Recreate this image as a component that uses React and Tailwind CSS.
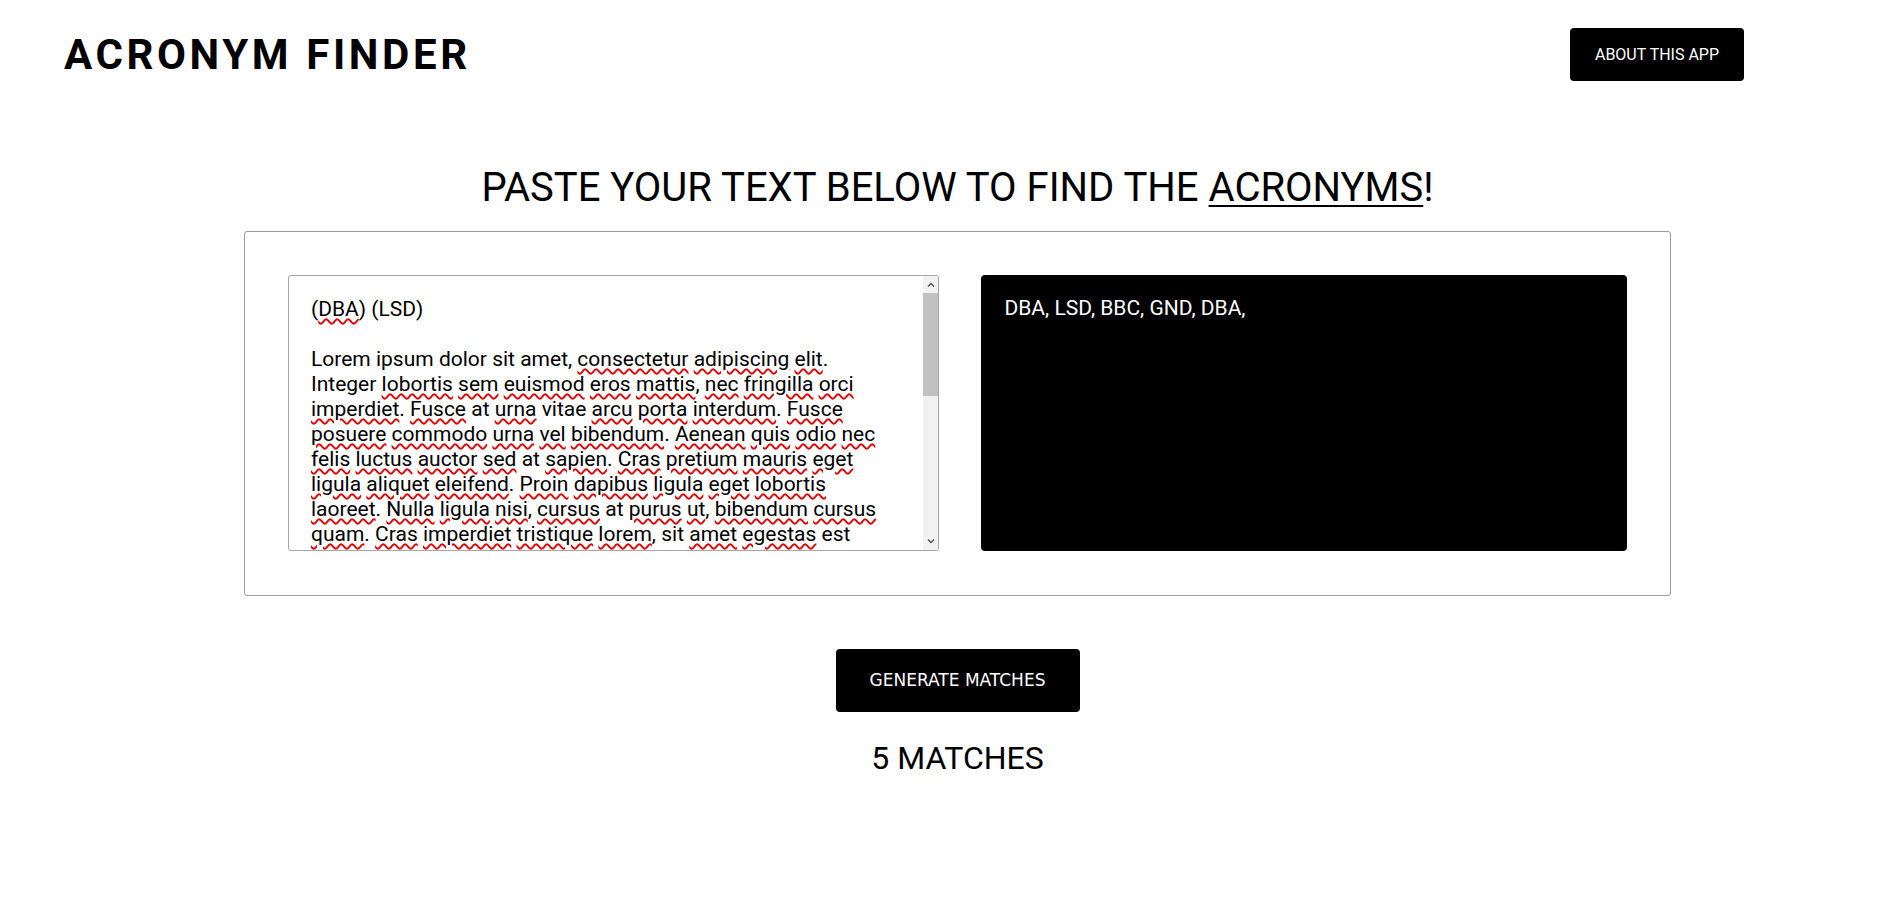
import React from "react";

const W = ({ children }) => (
  <span className="underline decoration-wavy decoration-[#e00000] decoration-[1.5px] underline-offset-[2px]">
    {children}
  </span>
);

const Chevron = ({ up }) => (
  <svg width="8" height="5" viewBox="0 0 8 5" className="block">
    <path
      d={up ? "M1 4.5 L4 1.5 L7 4.5" : "M1 0.5 L4 3.5 L7 0.5"}
      fill="none"
      stroke="#505050"
      strokeWidth="1.4"
    />
  </svg>
);

export default function App() {
  return (
    <div className="min-h-screen bg-white text-black font-['Roboto','Liberation_Sans',sans-serif]">
      <header className="flex items-center justify-between pt-[28px] pl-[64px] pr-[156px]">
        <h1 className="text-[42px] leading-[49px] font-bold tracking-[3.6px]">ACRONYM FINDER</h1>
        <button className="w-[174px] h-[53px] rounded-[4px] bg-black text-white text-[16px]">
          ABOUT THIS APP
        </button>
      </header>

      <main className="ml-[244px] w-[1427px]">
        <h2 className="mt-[83px] text-center text-[40px] leading-[47px] font-normal">
          PASTE YOUR TEXT BELOW TO FIND THE{" "}
          <span className="underline underline-offset-[4px] decoration-2">ACRONYMS</span>!
        </h2>

        <section className="mt-[20px] h-[365px] border border-[#9c9c9c] rounded-[3px] p-[43px] flex gap-[42px]">
          <div className="w-[652px] h-[276px] border border-[#a5a5a5] rounded-[3px] flex overflow-hidden">
            <div className="flex-1 overflow-hidden pl-[22px] pt-[21px] text-[21px] leading-[25px] text-black whitespace-nowrap">
              (<W>DBA</W>) (LSD)
              <br />
              <br />
              Lorem ipsum dolor sit amet, <W>consectetur</W> <W>adipiscing</W> <W>elit</W>.
              <br />
              Integer <W>lobortis</W> <W>sem</W> <W>euismod</W> <W>eros</W> <W>mattis</W>, <W>nec</W> <W>fringilla</W> <W>orci</W>
              <br />
              <W>imperdiet</W>. <W>Fusce</W> at <W>urna</W> vitae <W>arcu</W> <W>porta</W> <W>interdum</W>. <W>Fusce</W>
              <br />
              <W>posuere</W> <W>commodo</W> <W>urna</W> <W>vel</W> <W>bibendum</W>. <W>Aenean</W> <W>quis</W> <W>odio</W> <W>nec</W>
              <br />
              <W>felis</W> <W>luctus</W> <W>auctor</W> <W>sed</W> at <W>sapien</W>. <W>Cras</W> <W>pretium</W> <W>mauris</W> <W>eget</W>
              <br />
              <W>ligula</W> <W>aliquet</W> <W>eleifend</W>. <W>Proin</W> <W>dapibus</W> <W>ligula</W> <W>eget</W> <W>lobortis</W>
              <br />
              <W>laoreet</W>. <W>Nulla</W> <W>ligula</W> <W>nisi</W>, <W>cursus</W> at <W>purus</W> <W>ut</W>, <W>bibendum</W> <W>cursus</W>
              <br />
              <W>quam</W>. <W>Cras</W> <W>imperdiet</W> <W>tristique</W> <W>lorem</W>, sit <W>amet</W> <W>egestas</W> est
              <br />
              <W>dapibus</W> <W>vel</W>. <W>Donec</W> (BBC) <W>vulputate</W> <W>ante</W> <W>quis</W> <W>velit</W>
            </div>
            <div className="w-[15px] h-full bg-[#f1f1f1] flex flex-col">
              <div className="h-[17px] flex items-center justify-center">
                <Chevron up />
              </div>
              <div className="h-[103px] bg-[#c1c1c1]" />
              <div className="flex-1" />
              <div className="h-[17px] flex items-center justify-center">
                <Chevron />
              </div>
            </div>
          </div>

          <div className="w-[646px] h-[276px] bg-black rounded-[4px] pl-[23px] pt-[21px] text-white text-[21px] leading-[25px]">
            DBA, LSD, BBC, GND, DBA,
          </div>
        </section>

        <div className="flex flex-col items-center">
          <button className="mt-[53px] w-[244px] h-[63px] rounded-[4px] bg-black text-white text-[17px] font-['DejaVu_Sans',sans-serif]">
            GENERATE MATCHES
          </button>
          <p className="mt-[28px] text-[32px] leading-[37px]">5 MATCHES</p>
        </div>
      </main>
    </div>
  );
}
